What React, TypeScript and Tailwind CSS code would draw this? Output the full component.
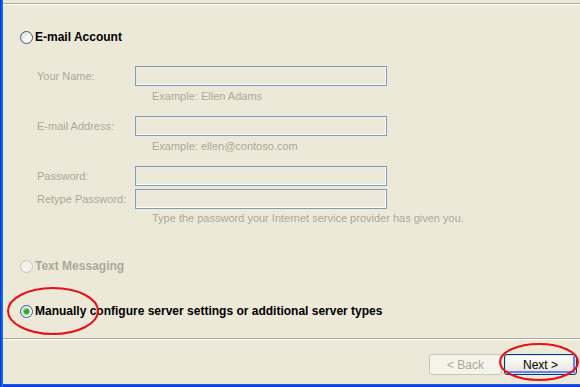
import React from 'react';

const font = { fontFamily: '"Liberation Sans", Arial, sans-serif' };

const Radio: React.FC<{ checked?: boolean; disabled?: boolean }> = ({ checked, disabled }) => (
  <span
    className={`w-[13px] h-[13px] rounded-full border flex items-center justify-center flex-shrink-0 ${
      disabled
        ? 'border-[#cac8bb] bg-[#f3f1e8]'
        : 'border-[#2f5f91] bg-gradient-to-br from-[#dcdad0] via-[#f4f3ee] to-white'
    }`}
  >
    {checked && <span className="w-[5px] h-[5px] rounded-full bg-[#2ea82e] shadow-[0_0_0_1px_#8fd48f]" />}
  </span>
);

const TextBox = () => (
  <div className="w-[252px] h-[20px] border border-[#7f9db9] bg-[#ece9d8]">
    <div className="w-full h-full border-r border-b border-white" />
  </div>
);

const FieldRow: React.FC<{ label: string; className?: string }> = ({ label, className = '' }) => (
  <div className={`flex items-center ${className}`}>
    <span className="w-[98px] text-[11px] text-[#aca899]">{label}</span>
    <TextBox />
  </div>
);

const Hint: React.FC<{ text: string; className?: string }> = ({ text, className = '' }) => (
  <div className={`pl-[115px] text-[11px] leading-[13px] text-[#aca899] ${className}`}>{text}</div>
);

export default function App() {
  return (
    <div className="relative w-[580px] h-[387px] overflow-hidden bg-[#ece9d8]" style={font}>
      <div className="flex h-full">
        {/* window frame, left edge */}
        <div className="w-[3px] h-full bg-gradient-to-r from-[#0831d9] via-[#0a5ae8] to-[#2b7df5] flex-shrink-0" />

        <div className="flex-1 flex flex-col">
          <div className="h-[3px]" />
          <div className="h-px bg-[#aca899]" />
          <div className="h-px bg-white" />

          <div className="flex-1 flex flex-col">
            <div className="flex items-center gap-[2px] pl-[17px] mt-[26px]">
              <Radio />
              <span className="text-[12px] font-bold text-black leading-[13px]">E-mail Account</span>
            </div>

            <div className="pl-[34px]">
              <FieldRow label="Your Name:" className="mt-[22px]" />
              <Hint text="Example: Ellen Adams" className="mt-[4px]" />
              <FieldRow label="E-mail Address:" className="mt-[13px]" />
              <Hint text="Example: ellen@contoso.com" className="mt-[4px]" />
              <FieldRow label="Password:" className="mt-[13px]" />
              <FieldRow label="Retype Password:" className="mt-[3px]" />
              <Hint text="Type the password your Internet service provider has given you." className="mt-[3px]" />
            </div>

            <div className="flex items-center gap-[2px] pl-[17px] mt-[35px]">
              <Radio disabled />
              <span className="text-[12px] font-bold text-[#aca899] leading-[13px]">Text Messaging</span>
            </div>

            <div className="flex items-center gap-[2px] pl-[17px] mt-[32px]">
              <Radio checked />
              <span className="text-[12px] font-bold text-black leading-[13px]">
                Manually configure server settings or additional server types
              </span>
            </div>

            <div className="mt-[20px] h-px bg-[#aca899]" />
            <div className="h-px bg-white" />

            <div className="flex justify-end gap-[2px] pr-[3px] mt-[14px]">
              <button className="w-[73px] h-[21px] rounded-[3px] border border-[#c9c7ba] bg-[#f5f4ea] text-[12px] text-[#aca899]">
                &lt; Back
              </button>
              <button className="w-[73px] h-[21px] rounded-[3px] border border-[#003c74] bg-gradient-to-b from-white to-[#e6e3d6] shadow-[inset_0_0_0_1px_#cee7ff,inset_-1px_-1px_0_2px_#6982ee] text-[12px] text-black">
                Next &gt;
              </button>
            </div>
          </div>

          {/* window frame, bottom edge */}
          <div className="h-[3px] bg-gradient-to-b from-[#1b5fe0] to-[#0831d9]" />
        </div>
      </div>

      {/* red annotation marks */}
      <svg className="absolute inset-0 pointer-events-none" width="580" height="387">
        <ellipse cx="53" cy="311" rx="45" ry="23" fill="none" stroke="#e8101a" strokeWidth="2" />
        <ellipse cx="539" cy="362" rx="39" ry="18" fill="none" stroke="#e8101a" strokeWidth="2" />
      </svg>
    </div>
  );
}
